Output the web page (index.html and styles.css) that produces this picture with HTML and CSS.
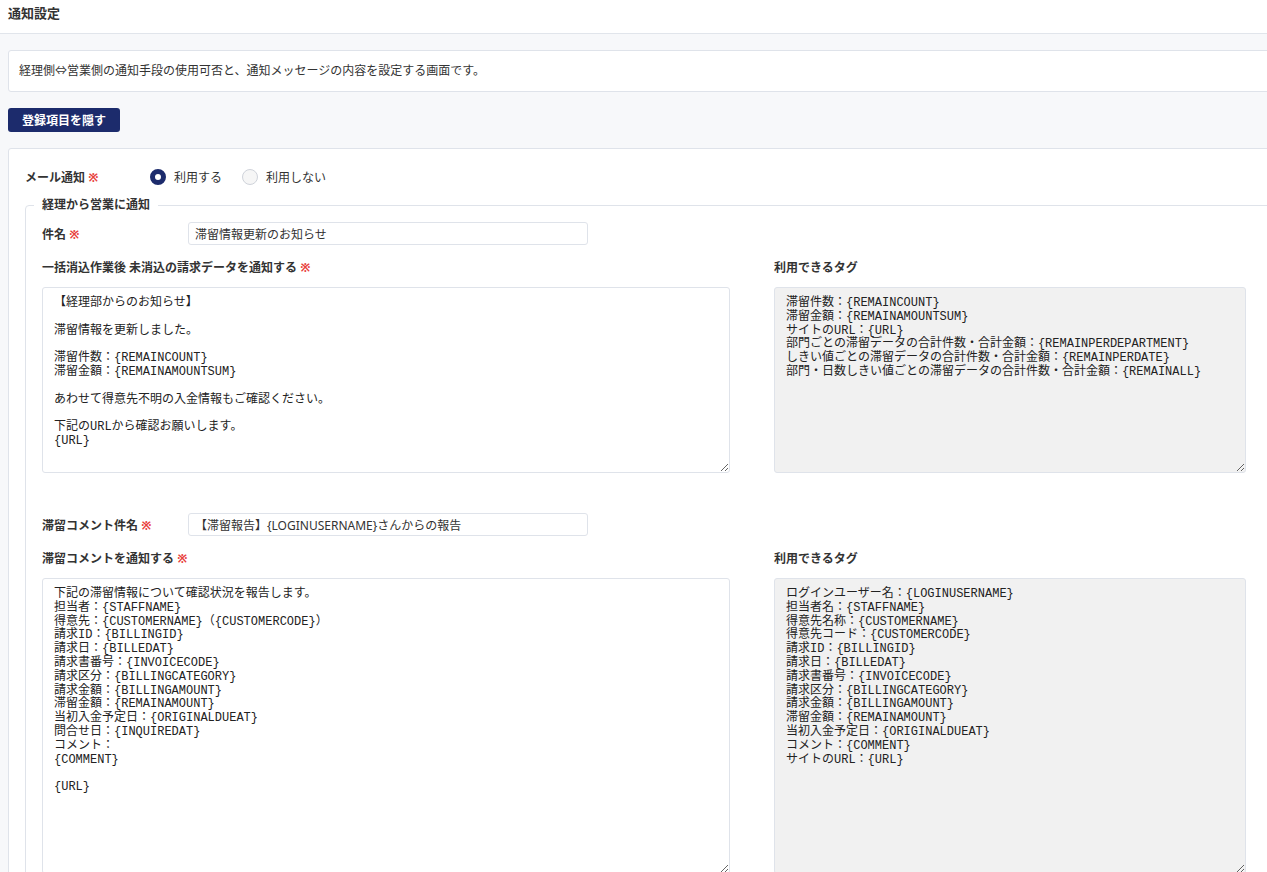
FILE: index.html
```html
<!DOCTYPE html>
<html lang="ja">
<head>
    <meta charset="UTF-8">
    <meta name="viewport" content="width=device-width, initial-scale=1.0">
    <title>通知設定</title>
    <link rel="stylesheet" href="styles.css">
</head>
<body>
    <div class="page">
        <header class="page-header">
            <h1>通知設定</h1>
        </header>

        <main class="page-body">
            <div class="notice">経理側⇔営業側の通知手段の使用可否と、通知メッセージの内容を設定する画面です。</div>

            <button type="button" class="btn-toggle">登録項目を隠す</button>

            <section class="settings-card">
                <!-- メール通知 -->
                <div class="radio-row">
                    <span class="row-label">メール通知 <span class="req">※</span></span>
                    <label class="radio"><input type="radio" name="mail" checked> 利用する</label>
                    <label class="radio"><input type="radio" name="mail"> 利用しない</label>
                </div>

                <fieldset class="notify-group">
                    <legend>経理から営業に通知</legend>

                    <!-- 一括消込 -->
                    <div class="field-row">
                        <label class="field-label" for="subject1">件名 <span class="req">※</span></label>
                        <input type="text" id="subject1" class="text-input" value="滞留情報更新のお知らせ">
                    </div>
                    <div class="message-grid">
                        <div class="message-col">
                            <label class="block-label" for="body1">一括消込作業後 未消込の請求データを通知する <span class="req">※</span></label>
                            <textarea id="body1" class="message-input short">【経理部からのお知らせ】

滞留情報を更新しました。

滞留件数：{REMAINCOUNT}
滞留金額：{REMAINAMOUNTSUM}

あわせて得意先不明の入金情報もご確認ください。

下記のURLから確認お願いします。
{URL}</textarea>
                        </div>
                        <div class="message-col">
                            <label class="block-label">利用できるタグ</label>
                            <textarea class="message-input tags short" readonly>滞留件数：{REMAINCOUNT}
滞留金額：{REMAINAMOUNTSUM}
サイトのURL：{URL}
部門ごとの滞留データの合計件数・合計金額：{REMAINPERDEPARTMENT}
しきい値ごとの滞留データの合計件数・合計金額：{REMAINPERDATE}
部門・日数しきい値ごとの滞留データの合計件数・合計金額：{REMAINALL}</textarea>
                        </div>
                    </div>

                    <!-- 滞留コメント -->
                    <div class="field-row spaced">
                        <label class="field-label" for="subject2">滞留コメント件名 <span class="req">※</span></label>
                        <input type="text" id="subject2" class="text-input" value="【滞留報告】{LOGINUSERNAME}さんからの報告">
                    </div>
                    <div class="message-grid second">
                        <div class="message-col">
                            <label class="block-label" for="body2">滞留コメントを通知する <span class="req">※</span></label>
                            <textarea id="body2" class="message-input tall">下記の滞留情報について確認状況を報告します。
担当者：{STAFFNAME}
得意先：{CUSTOMERNAME}（{CUSTOMERCODE}）
請求ID：{BILLINGID}
請求日：{BILLEDAT}
請求書番号：{INVOICECODE}
請求区分：{BILLINGCATEGORY}
請求金額：{BILLINGAMOUNT}
滞留金額：{REMAINAMOUNT}
当初入金予定日：{ORIGINALDUEAT}
問合せ日：{INQUIREDAT}
コメント：
{COMMENT}

{URL}</textarea>
                        </div>
                        <div class="message-col">
                            <label class="block-label">利用できるタグ</label>
                            <textarea class="message-input tags tall" readonly>ログインユーザー名：{LOGINUSERNAME}
担当者名：{STAFFNAME}
得意先名称：{CUSTOMERNAME}
得意先コード：{CUSTOMERCODE}
請求ID：{BILLINGID}
請求日：{BILLEDAT}
請求書番号：{INVOICECODE}
請求区分：{BILLINGCATEGORY}
請求金額：{BILLINGAMOUNT}
滞留金額：{REMAINAMOUNT}
当初入金予定日：{ORIGINALDUEAT}
コメント：{COMMENT}
サイトのURL：{URL}</textarea>
                        </div>
                    </div>
                </fieldset>
            </section>
        </main>
    </div>
</body>
</html>
```

FILE: styles.css
```css
html {
    overflow: hidden;
}

body {
    margin: 0;
    padding: 0;
    font-family: "Noto Sans", "Noto Sans CJK JP", sans-serif;
    font-size: 12px;
    color: #333;
    background-color: #f7f8fa;
}

.page {
    width: 1320px;
}

.page-header {
    height: 33px;
    background-color: #fff;
    border-bottom: 1px solid #e1e5eb;
    padding: 0 8px;
    display: flex;
    align-items: center;
}

.page-header h1 {
    margin: 0;
    margin-top: -9px;
    font-size: 13px;
    font-weight: bold;
    color: #333;
}

.page-body {
    padding: 16px 8px;
}

.notice {
    background-color: #fff;
    border: 1px solid #dfe3ea;
    border-radius: 3px;
    padding: 10px 10px;
    line-height: 20px;
}

.btn-toggle {
    display: block;
    margin-top: 16px;
    width: 112px;
    height: 24px;
    padding: 0;
    border: none;
    border-radius: 3px;
    background-color: #1c2b6c;
    color: #fff;
    font-family: inherit;
    font-size: 12px;
    font-weight: bold;
    cursor: pointer;
}

.btn-toggle:hover {
    background-color: #14205a;
}

.settings-card {
    margin-top: 16px;
    background-color: #fff;
    border: 1px solid #dfe3ea;
    border-radius: 3px;
    padding: 18px 16px 16px;
}

.req {
    color: #e8413c;
}

.radio-row {
    display: flex;
    align-items: center;
    height: 20px;
}

.row-label {
    width: 125px;
    font-weight: bold;
}

.radio {
    display: flex;
    align-items: center;
    gap: 8px;
    margin-right: 20px;
}

.radio input {
    appearance: none;
    width: 16px;
    height: 16px;
    margin: 0;
    border-radius: 50%;
    border: 1px solid #cfd3da;
    background-color: #f6f6f6;
}

.radio input:checked {
    border: 5px solid #1c2b6c;
    background-color: #fff;
}

.notify-group {
    margin: 9px 0 0;
    border: 1px solid #dfe3ea;
    border-radius: 4px;
    padding: 8px 16px 16px;
}

.notify-group legend {
    margin-left: -8px;
    padding: 0 8px;
    font-weight: bold;
    line-height: 18px;
}

.field-row {
    display: flex;
    align-items: center;
}

.field-row.spaced {
    margin-top: 40px;
}

.field-label {
    width: 146px;
    font-weight: bold;
}

.text-input {
    width: 400px;
    height: 23px;
    box-sizing: border-box;
    padding: 0 6px;
    border: 1px solid #dfe3ea;
    border-radius: 3px;
    font-family: "Noto Sans", "Noto Sans CJK JP", sans-serif;
    font-size: 12px;
    color: #333;
}

.message-grid {
    display: grid;
    grid-template-columns: 688px 472px;
    column-gap: 44px;
    margin-top: 14px;
}

.message-grid.second {
    margin-top: 14px;
}

.block-label {
    display: block;
    font-weight: bold;
    line-height: 18px;
    margin-bottom: 10px;
}

.message-input {
    display: block;
    width: 100%;
    box-sizing: border-box;
    margin: 0;
    padding: 9px 11px 7px;
    border: 1px solid #dfe3ea;
    border-radius: 3px;
    font-family: "Liberation Mono", "Noto Sans CJK JP", monospace;
    font-size: 12px;
    line-height: 13.8px;
    color: #222;
    background-color: #fff;
}

.message-input.tags {
    background-color: #f1f1f1;
}

.message-input.short {
    height: 186px;
}

.message-input.tall {
    height: 296px;
}
```
